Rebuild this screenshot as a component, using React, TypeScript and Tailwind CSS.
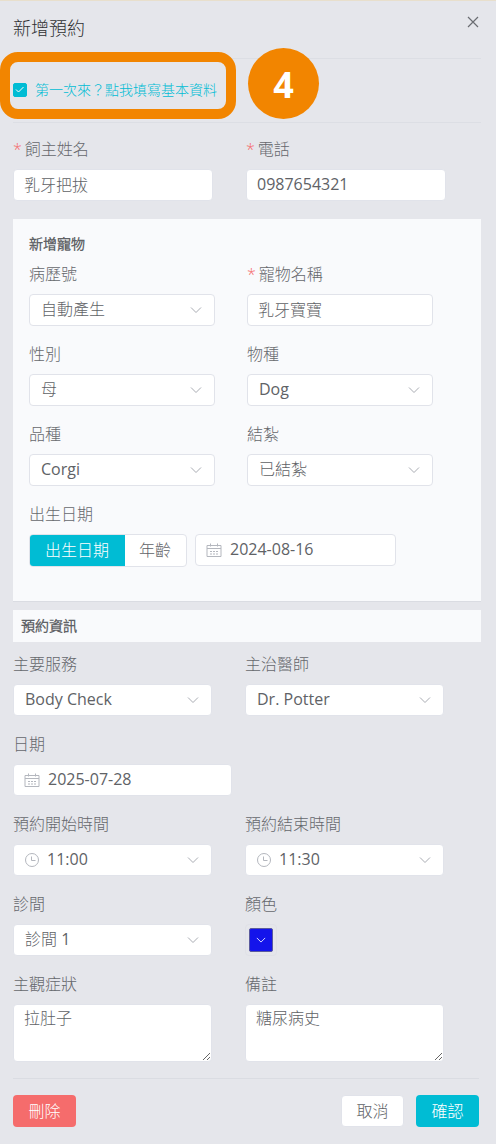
/**
 * New appointment form: owner details, new pet panel and booking info, with a
 * numbered tutorial callout over the "first visit" checkbox.
 */
import { useState } from "react";
import type { ReactNode } from "react";

type FieldProps = {
  id: string;
  label: string;
  required?: boolean;
  children: ReactNode;
};

type SelectProps = {
  id: string;
  options: readonly string[];
  icon?: ReactNode;
};

type TextInputProps = {
  id: string;
  value: string;
  icon?: ReactNode;
};

const CONTROL =
  "block h-8 w-full appearance-none rounded border border-[#e1e3ea] bg-white pr-3 pb-0.5 text-base text-[#606266] outline-none";

function ChevronIcon({ className }: { className: string }) {
  return (
    <svg viewBox="0 0 12 12" className={className} fill="none" aria-hidden="true">
      <path d="M1 3.5 6 8.5l5-5" stroke="currentColor" strokeWidth={1} />
    </svg>
  );
}

function CalendarIcon() {
  return (
    <svg
      viewBox="0 0 16 16"
      className="h-4 w-4"
      fill="none"
      stroke="currentColor"
      aria-hidden="true"
    >
      <path d="M1 3.500h14v11H1zM1 6.500h14M4.500 1.500v3M11.500 1.500v3" />
      <path d="M4 9.500h8M4 12h8" strokeDasharray="2 1" />
    </svg>
  );
}

function ClockIcon() {
  return (
    <svg
      viewBox="0 0 16 16"
      className="h-4 w-4"
      fill="none"
      stroke="currentColor"
      aria-hidden="true"
    >
      <circle cx={8} cy={8} r={6.5} />
      <path d="M7.500 4.500v4H11.500" />
    </svg>
  );
}

function Field({ id, label, required, children }: FieldProps) {
  return (
    <div className="mb-2">
      <label
        htmlFor={id}
        className="block h-10 text-base leading-10 font-light text-[#66686d]"
      >
        {required ? <span className="mr-[3px] text-[#f56c6c]">*</span> : null}
        {label}
      </label>
      {children}
    </div>
  );
}

function PrefixIcon({ children }: { children: ReactNode }) {
  return (
    <span className="pointer-events-none absolute top-2 left-[11px] text-[#b4b7be]">
      {children}
    </span>
  );
}

function Select({ id, options, icon }: SelectProps) {
  return (
    <div className="relative">
      {icon ? <PrefixIcon>{icon}</PrefixIcon> : null}
      <select
        id={id}
        defaultValue={options[0]}
        className={`${CONTROL} ${icon ? "pl-[33px]" : "pl-[11px]"}`}
      >
        {options.map((option) => (
          <option key={option}>{option}</option>
        ))}
      </select>
      <ChevronIcon className="pointer-events-none absolute top-2.5 right-[13px] h-3 w-3 text-[#a9acb3]" />
    </div>
  );
}

function TextInput({ id, value, icon }: TextInputProps) {
  return (
    <div className="relative">
      {icon ? <PrefixIcon>{icon}</PrefixIcon> : null}
      <input
        id={id}
        type="text"
        defaultValue={value}
        className={`${CONTROL} ${icon ? "pl-[34px]" : "pl-2.5"}`}
      />
    </div>
  );
}

function TextArea({ id, value }: { id: string; value: string }) {
  return (
    <textarea
      id={id}
      defaultValue={value}
      className="block h-[58px] w-full resize rounded border border-[#e1e3ea] bg-white px-2.5 py-px text-base leading-6 font-light text-[#606266] outline-none"
    />
  );
}

export default function App() {
  const [firstVisit, setFirstVisit] = useState(true);
  const [birthMode, setBirthMode] = useState<"date" | "age">("date");

  return (
    <form className="min-h-screen border-t border-[#e8dfcc] bg-[#e5e6eb] pr-[15px] pb-4 pl-[13px] font-['Open_Sans','Noto_Sans_CJK_TC_Light','Noto_Sans_CJK_TC',sans-serif] text-[#606266]">
      <header className="flex h-[58px] items-center justify-between border-b border-[#dcdee4] pb-1">
        <h1 className="text-lg leading-7 font-light text-[#303133]">新增預約</h1>
        <button type="button" aria-label="關閉" className="mb-3 text-[#6b6d72]">
          <svg viewBox="0 0 16 16" className="h-4 w-4" fill="none" aria-hidden="true">
            <path d="m3 3 10 10M13 3 3 13" stroke="currentColor" strokeWidth={1.2} />
          </svg>
        </button>
      </header>

      <div className="relative flex h-16 items-center border-b border-[#dcdee4] pb-0.5">
        <label className="flex items-center gap-2 text-sm text-[#00bcd4]">
          <span className="relative flex">
            <input
              type="checkbox"
              checked={firstVisit}
              onChange={(e) => setFirstVisit(e.target.checked)}
              className="h-3.5 w-3.5 appearance-none rounded-xs border border-[#00bcd4] bg-white checked:bg-[#00bcd4]"
            />
            {firstVisit ? (
              <svg
                viewBox="0 0 14 14"
                className="pointer-events-none absolute inset-0 h-3.5 w-3.5"
                fill="none"
                aria-hidden="true"
              >
                <path d="m3 6.500 2.500 2.500 5-5" stroke="white" />
              </svg>
            ) : null}
          </span>
          第一次來？點我填寫基本資料
        </label>
        <div className="pointer-events-none absolute -top-[7px] -left-[13px] h-[67px] w-[236px] rounded-[18px] border-10 border-[#f28500]" />
        <div className="pointer-events-none absolute -top-[11px] left-[235px] flex h-[71px] w-[71px] items-center justify-center rounded-full bg-[#f28500] pt-0.5 text-4xl font-bold text-white">
          4
        </div>
      </div>

      <section className="mt-1.5 grid grid-cols-2 pr-0.5">
        <div className="pr-[33px]">
          <Field id="owner" label="飼主姓名" required>
            <TextInput id="owner" value="乳牙把拔" />
          </Field>
        </div>
        <div className="pr-[33px]">
          <Field id="phone" label="電話" required>
            <TextInput id="phone" value="0987654321" />
          </Field>
        </div>
      </section>

      <section className="mt-2.5 border-b border-[#dadce2] bg-[#f9fafc] px-4 pt-[15px] pb-[26px]">
        <h2 className="text-sm leading-5 font-bold">新增寵物</h2>
        <div className="grid grid-cols-2">
          <div className="pr-8">
            <Field id="chart" label="病歷號">
              <Select id="chart" options={["自動產生", "手動輸入"]} />
            </Field>
            <Field id="sex" label="性別">
              <Select id="sex" options={["母", "公"]} />
            </Field>
            <Field id="breed" label="品種">
              <Select id="breed" options={["Corgi"]} />
            </Field>
          </div>
          <div className="pr-8">
            <Field id="pet" label="寵物名稱" required>
              <TextInput id="pet" value="乳牙寶寶" />
            </Field>
            <Field id="species" label="物種">
              <Select id="species" options={["Dog", "Cat"]} />
            </Field>
            <Field id="neutered" label="結紮">
              <Select id="neutered" options={["已結紮", "未結紮"]} />
            </Field>
          </div>
        </div>
        <Field id="birth" label="出生日期">
          <div className="flex gap-2">
            <div className="flex h-[33px] overflow-hidden rounded border border-[#e1e3ea] bg-white">
              <button
                type="button"
                onClick={() => setBirthMode("date")}
                className={`-m-px w-24 pb-0.5 ${birthMode === "date" ? "bg-[#00bcd4] text-white" : ""}`}
              >
                出生日期
              </button>
              <button
                type="button"
                onClick={() => setBirthMode("age")}
                className={`w-[62px] pb-0.5 ${birthMode === "age" ? "bg-[#00bcd4] text-white" : ""}`}
              >
                年齡
              </button>
            </div>
            <div className="w-[201px]">
              <TextInput id="birth" value="2024-08-16" icon={<CalendarIcon />} />
            </div>
          </div>
        </Field>
      </section>

      <h2 className="mt-2 mb-0.5 bg-[#f9fafc] px-2 text-sm leading-8 font-bold">
        預約資訊
      </h2>

      <section className="grid grid-cols-2 pr-1">
        <div className="pr-[33px]">
          <Field id="service" label="主要服務">
            <Select id="service" options={["Body Check"]} />
          </Field>
        </div>
        <div className="pr-[33px]">
          <Field id="doctor" label="主治醫師">
            <Select id="doctor" options={["Dr. Potter"]} />
          </Field>
        </div>
        <div className="col-span-2">
          <Field id="date" label="日期">
            <div className="w-[219px]">
              <TextInput id="date" value="2025-07-28" icon={<CalendarIcon />} />
            </div>
          </Field>
        </div>
        <div className="pr-[33px]">
          <Field id="start" label="預約開始時間">
            <Select id="start" options={["11:00", "11:30"]} icon={<ClockIcon />} />
          </Field>
          <Field id="room" label="診間">
            <Select id="room" options={["診間 1", "診間 2"]} />
          </Field>
          <Field id="symptom" label="主觀症狀">
            <TextArea id="symptom" value="拉肚子" />
          </Field>
        </div>
        <div className="pr-[33px]">
          <Field id="end" label="預約結束時間">
            <Select id="end" options={["11:30", "12:00"]} icon={<ClockIcon />} />
          </Field>
          <Field id="color" label="顏色">
            <button
              id="color"
              type="button"
              className="flex h-8 w-8 items-center justify-center rounded border border-[#e0e1e7] p-[3px]"
            >
              <span className="flex h-6 w-6 items-center justify-center rounded-xs border border-[#5a5a9e] bg-[#1414eb] text-white">
                <ChevronIcon className="h-2.5 w-2.5" />
              </span>
            </button>
          </Field>
          <Field id="note" label="備註">
            <TextArea id="note" value="糖尿病史" />
          </Field>
        </div>
      </section>

      <footer className="mt-2 mr-0.5 flex items-center justify-between border-t border-[#dadce2] pt-4">
        <button type="button" className="h-8 w-[63px] rounded bg-[#f56c6c] text-white">
          刪除
        </button>
        <div className="flex gap-3">
          <button
            type="button"
            className="h-8 w-[63px] rounded border border-[#e1e3ea] bg-white"
          >
            取消
          </button>
          <button type="submit" className="h-8 w-[63px] rounded bg-[#00bcd4] text-white">
            確認
          </button>
        </div>
      </footer>
    </form>
  );
}
